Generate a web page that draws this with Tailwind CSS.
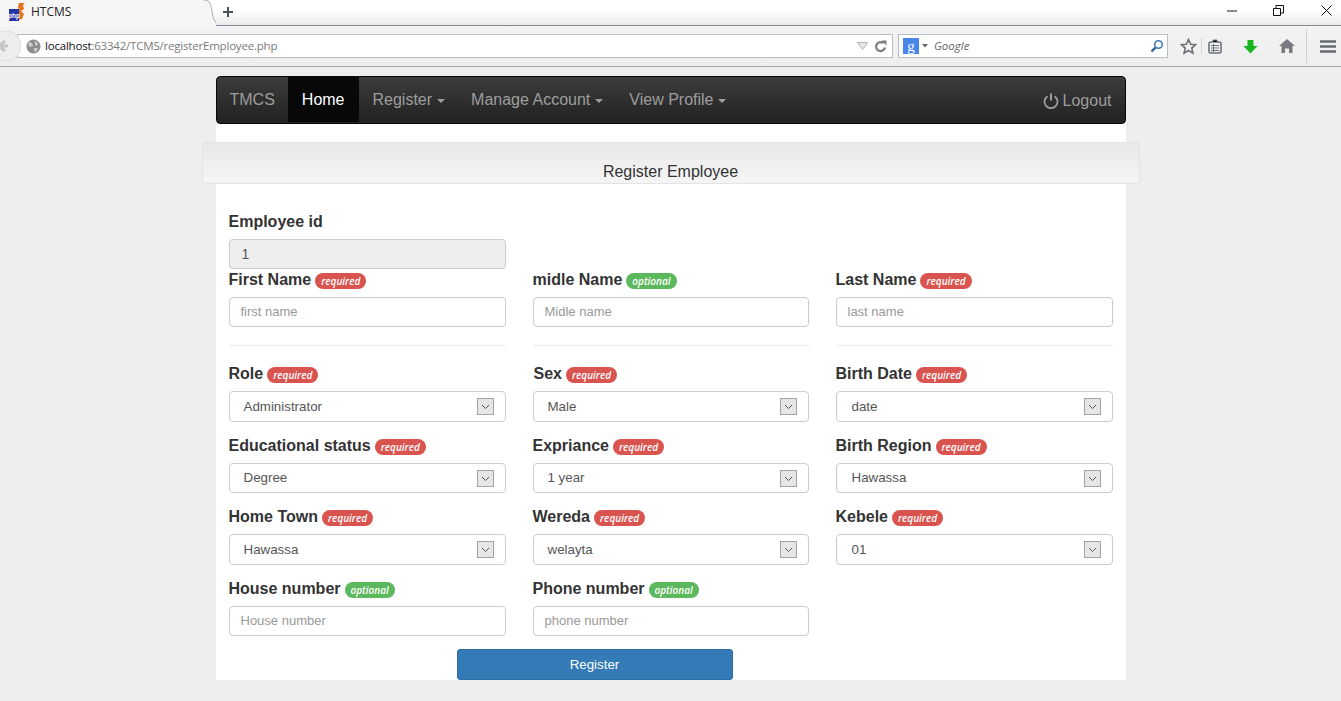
<!DOCTYPE html>
<html lang="en">
<head>
<meta charset="utf-8">
<title>HTCMS</title>
<script src="https://cdn.jsdelivr.net/npm/@tailwindcss/browser@4"></script>
</head>
<body class="h-[701px] overflow-hidden bg-[#eeeeee] font-['Liberation_Sans',Arial,sans-serif] text-[#333]">
<!-- browser chrome -->
<header class="relative h-[67px] font-['Open_Sans',sans-serif]">
  <div class="relative flex h-[26px] items-start border-b border-[#7f8b96] bg-gradient-to-b from-white from-40% to-[#ebebeb]">
    <svg class="absolute left-0 top-0 h-[26px] w-[216px]" viewBox="0 0 216 26"><path d="M0 0H204C210 0 211 5 212 11C213 19 215 23 219 25.5H219V26H0Z" fill="#f6f6f6"/><path d="M204 0C210 0 211 5 212 11C213 19 215 23 219 25.5" fill="none" stroke="#a6adb3"/></svg>
    <div class="relative flex h-[24px] w-[212px] items-center pl-[9px]">
      <svg width="17" height="18" viewBox="0 0 17 18" class="shrink-0"><path d="M10 0h6l-2 2 1 4-3 2 3 3-2 5-4 1 1-4-1-3 1-3-1-3z" fill="#e8741a"/><rect x="0" y="6" width="10" height="12" fill="#2533a8"/><text x="5" y="15" text-anchor="middle" font-size="6.5" font-weight="700" fill="#fff" font-family="Liberation Sans">php</text></svg>
      <span class="ml-[5px] text-[12px] leading-none text-[#222]">HTCMS</span>
    </div>
    <svg class="relative ml-[10px] mt-[6px]" width="12" height="12" viewBox="0 0 12 12"><path d="M6 1v10M1 6h10" stroke="#4a5158" stroke-width="2"/></svg>
    <div class="ml-auto flex h-[20px] items-center text-[#111]">
      <svg class="mr-[35px]" width="11" height="11" viewBox="0 0 11 11"><path d="M0 6h10" stroke="#111"/></svg>
      <svg class="mr-[37px]" width="11" height="11" viewBox="0 0 11 11"><path d="M.5 3.5h7v7h-7zM3 3V.5h7.5V8H8" fill="none" stroke="#111"/></svg>
      <svg class="mr-[9px]" width="11" height="11" viewBox="0 0 11 11"><path d="M.5.5l10 10M10.500.5l-10 10" stroke="#111" stroke-width="1"/></svg>
    </div>
  </div>
  <div class="flex h-[41px] items-center border-b border-[#aaaaaa] bg-gradient-to-b from-[#f3f3f3] to-[#eeeeee] pl-[17px]">
    <div class="flex h-[24px] w-[876px] items-center border border-[#b5bfca] bg-white pl-[8px] pr-[4px]">
      <svg width="15" height="15" viewBox="0 0 15 15" class="shrink-0"><circle cx="7.500" cy="7.500" r="7" fill="#8d8d8d"/><path d="M3 3l3 1 1 3-3 1-2-2zM9 2l3 2-1 3-2-1zM8 9l4 0-2 4-2-1z" fill="#c9c9c9"/></svg>
      <span class="ml-[4px] text-[11.5px] tracking-[-0.2px] text-[#111]">localhost<span class="text-[#7a7a7a]">:63342/TCMS/registerEmployee.php</span></span>
      <svg class="ml-auto" width="11" height="8" viewBox="0 0 11 8"><path d="M.5.500h10L5.500 7.500z" fill="#e8e8e8" stroke="#b5b5b5"/></svg>
      <svg class="ml-[6px] mr-[1px]" width="13" height="13" viewBox="0 0 13 13"><path d="M11 7.500A4.500 4.500 0 1 1 9.500 3.200" fill="none" stroke="#7b7f84" stroke-width="2.200"/><path d="M7.500 .5h5v5z" fill="#7b7f84"/></svg>
    </div>
    <div class="ml-[5px] flex h-[24px] w-[270px] items-center border border-[#b5bfca] bg-white pl-[4px] pr-[3px]">
      <span class="flex h-[16px] w-[16px] items-center justify-center bg-[#4a86e8] font-['Liberation_Serif',serif] text-[15px] leading-none text-white">g</span>
      <svg class="ml-[3px]" width="7" height="4" viewBox="0 0 7 4"><path d="M0 0h6L3 3.500z" fill="#666"/></svg>
      <span class="ml-[5px] text-[11.5px] italic text-[#666]">Google</span>
      <svg class="ml-auto" width="14" height="14" viewBox="0 0 14 14"><circle cx="8.500" cy="5.500" r="3.800" fill="none" stroke="#3d7ab5" stroke-width="1.600"/><path d="M5.500 8.500L1.500 12.500" stroke="#2a5f96" stroke-width="2.400"/></svg>
    </div>
    <svg class="ml-[12px]" width="17" height="17" viewBox="0 0 17 17"><path d="M8.500 1.500l2.100 4.700 5 .5-3.800 3.400 1.100 5-4.400-2.600-4.400 2.600 1.100-5L1.400 6.700l5-.5z" fill="none" stroke="#6e7277" stroke-width="1.600"/></svg>
    <span class="ml-[4px] h-[16px] w-px bg-[#d4d4d4]"></span>
    <svg class="ml-[6px]" width="14" height="15" viewBox="0 0 14 15"><rect x="1" y="3" width="12" height="11" rx="1.500" fill="none" stroke="#6e7277" stroke-width="1.600"/><path d="M5 3V1h4v2M3 6.500h8M3 9h8M3 11.500h8M5.500 5v8" stroke="#6e7277"/></svg>
    <svg class="ml-[21px]" width="15" height="15" viewBox="0 0 15 15"><path d="M4.500 1h6v6h4L7.500 14.500.5 7h4z" fill="#18b51e"/></svg>
    <svg class="ml-[21px]" width="16" height="14" viewBox="0 0 16 14"><path d="M8 0l8 7h-2.500v7h-3.500V9.500H6V14H2.500V7H0z" fill="#777b80"/></svg>
    <span class="ml-[11px] h-[34px] w-px bg-[#d0d0d0]"></span>
    <svg class="ml-[13px]" width="16" height="13" viewBox="0 0 16 13"><path d="M0 1.500h16M0 6.500h16M0 11.500h16" stroke="#666a6f" stroke-width="2.600"/></svg>
  </div>
  <svg class="absolute left-0 top-[29px]" width="24" height="34" viewBox="0 0 24 34"><circle cx="6" cy="17" r="15" fill="#eeeeee" stroke="#dddddd"/><path d="M-1 17h9M5 12l-6 5 6 5" fill="none" stroke="#c4c4c4" stroke-width="3"/></svg>
</header>
<!-- page -->
<main class="mx-auto mt-[9px] w-[910px] bg-white">
  <nav class="flex h-[48px] items-stretch rounded-[4px] border border-[#080808] bg-gradient-to-b from-[#3c3c3c] to-[#222222] text-[16px] text-[#9d9d9d]">
    <a class="flex h-[45px] items-center pl-[13px] pr-[13px]">TMCS</a>
    <a class="flex h-[45px] items-center bg-[#080808] px-[14px] text-white">Home</a>
    <a class="flex h-[45px] items-center gap-[5px] pl-[14px] pr-[12px]">Register <i class="mt-[2px] border-x-[4px] border-t-[4px] border-x-transparent border-t-[#9d9d9d]"></i></a>
    <a class="flex h-[45px] items-center gap-[5px] px-[14px]">Manage Account <i class="mt-[2px] border-x-[4px] border-t-[4px] border-x-transparent border-t-[#9d9d9d]"></i></a>
    <a class="flex h-[45px] items-center gap-[5px] px-[12px]">View Profile <i class="mt-[2px] border-x-[4px] border-t-[4px] border-x-transparent border-t-[#9d9d9d]"></i></a>
    <a class="ml-auto flex h-[47px] items-center gap-[4px] pr-[13px]">
      <svg width="16" height="16" viewBox="0 0 16 16"><path d="M4.500 3.200a6.500 6.500 0 1 0 7 0" fill="none" stroke="#9d9d9d" stroke-width="1.800"/><path d="M8 0.500v7" stroke="#9d9d9d" stroke-width="2"/></svg>
      Logout</a>
  </nav>
  <div class="-mx-[14px] mt-[18px] flex h-[42px] items-end justify-center rounded-[4px] border border-[#e3e3e3] bg-gradient-to-b from-[#e8e8e8] to-[#f5f5f5] text-[16px] leading-[23px] text-[#333]">Register Employee</div>
  <form class="px-[13px] pt-[28px]">
    <div class="grid grid-cols-[277px_276px_277px] gap-x-[27px]">
      <div>
        <label class="flex h-[27px] items-start text-[16px] font-bold leading-[20px]">Employee id</label>
        <div class="flex h-[30px] items-center rounded-[4px] border border-[#ccc] bg-[#eeeeee] pl-[12px] text-[14px] text-[#555]">1</div>
      </div>
    </div>
    <div class="mt-px grid grid-cols-[277px_276px_277px] gap-x-[27px]">
      <div>
        <label class="flex h-[27px] items-start gap-[4px] text-[16px] font-bold leading-[20px]">First Name <span class="mt-[3px] rounded-full bg-[#d9534f] px-[6px] font-['Open_Sans',sans-serif] text-[10px] font-semibold italic leading-[16px] text-white">required</span></label>
        <div class="flex h-[30px] items-center rounded-[4px] border border-[#ccc] bg-white pl-[11px] text-[13px] text-[#999]">first name</div>
      </div>
      <div>
        <label class="flex h-[27px] items-start gap-[4px] text-[16px] font-bold leading-[20px]">midle Name <span class="mt-[3px] rounded-full bg-[#5cb85c] px-[6px] font-['Open_Sans',sans-serif] text-[10px] font-semibold italic leading-[16px] text-white">optional</span></label>
        <div class="flex h-[30px] items-center rounded-[4px] border border-[#ccc] bg-white pl-[11px] text-[13px] text-[#999]">Midle name</div>
      </div>
      <div>
        <label class="flex h-[27px] items-start gap-[4px] text-[16px] font-bold leading-[20px]">Last Name <span class="mt-[3px] rounded-full bg-[#d9534f] px-[6px] font-['Open_Sans',sans-serif] text-[10px] font-semibold italic leading-[16px] text-white">required</span></label>
        <div class="flex h-[30px] items-center rounded-[4px] border border-[#ccc] bg-white pl-[11px] text-[13px] text-[#999]">last name</div>
      </div>
    </div>
    <div class="mt-[18px] grid grid-cols-[277px_276px_277px] gap-x-[27px]">
      <hr class="border-[#eeeeee]"><hr class="w-[277px] border-[#eeeeee]"><hr class="border-[#eeeeee]">
    </div>
    <div class="mt-[18px] grid grid-cols-[277px_276px_277px] gap-x-[27px] gap-y-[14px]">
      <div>
        <label class="flex h-[27px] items-start gap-[4px] text-[16px] font-bold leading-[20px]">Role <span class="mt-[3px] rounded-full bg-[#d9534f] px-[6px] font-['Open_Sans',sans-serif] text-[10px] font-semibold italic leading-[16px] text-white">required</span></label>
        <div class="flex h-[31px] items-center justify-between rounded-[4px] border border-[#ccc] bg-white pl-[14px] pr-[11px] text-[13.33px] text-[#555]">Administrator <svg width="17" height="17" viewBox="0 0 17 17"><rect x=".5" y=".5" width="16" height="16" fill="#e6e6e6" stroke="#a3a3a3"/><path d="M5 7l3.500 3.500L12 7" fill="none" stroke="#555"/></svg></div>
      </div>
      <div>
        <label class="flex h-[27px] items-start gap-[4px] pl-px text-[16px] font-bold leading-[20px]">Sex <span class="mt-[3px] rounded-full bg-[#d9534f] px-[6px] font-['Open_Sans',sans-serif] text-[10px] font-semibold italic leading-[16px] text-white">required</span></label>
        <div class="flex h-[31px] items-center justify-between rounded-[4px] border border-[#ccc] bg-white pl-[14px] pr-[11px] text-[13.33px] text-[#555]">Male <svg width="17" height="17" viewBox="0 0 17 17"><rect x=".5" y=".5" width="16" height="16" fill="#e6e6e6" stroke="#a3a3a3"/><path d="M5 7l3.500 3.500L12 7" fill="none" stroke="#555"/></svg></div>
      </div>
      <div>
        <label class="flex h-[27px] items-start gap-[4px] text-[16px] font-bold leading-[20px]">Birth Date <span class="mt-[3px] rounded-full bg-[#d9534f] px-[6px] font-['Open_Sans',sans-serif] text-[10px] font-semibold italic leading-[16px] text-white">required</span></label>
        <div class="flex h-[31px] items-center justify-between rounded-[4px] border border-[#ccc] bg-white pl-[15px] pr-[11px] text-[13.33px] text-[#555]">date <svg width="17" height="17" viewBox="0 0 17 17"><rect x=".5" y=".5" width="16" height="16" fill="#e6e6e6" stroke="#a3a3a3"/><path d="M5 7l3.500 3.500L12 7" fill="none" stroke="#555"/></svg></div>
      </div>
      <div>
        <label class="flex h-[27px] items-start gap-[4px] text-[16px] font-bold leading-[20px]">Educational status <span class="mt-[3px] rounded-full bg-[#d9534f] px-[6px] font-['Open_Sans',sans-serif] text-[10px] font-semibold italic leading-[16px] text-white">required</span></label>
        <div class="flex h-[30px] items-center justify-between rounded-[4px] border border-[#ccc] bg-white pl-[14px] pr-[11px] text-[13.33px] text-[#555]">Degree <svg width="17" height="17" viewBox="0 0 17 17"><rect x=".5" y=".5" width="16" height="16" fill="#e6e6e6" stroke="#a3a3a3"/><path d="M5 7l3.500 3.500L12 7" fill="none" stroke="#555"/></svg></div>
      </div>
      <div>
        <label class="flex h-[27px] items-start gap-[4px] text-[16px] font-bold leading-[20px]">Expriance <span class="mt-[3px] rounded-full bg-[#d9534f] px-[6px] font-['Open_Sans',sans-serif] text-[10px] font-semibold italic leading-[16px] text-white">required</span></label>
        <div class="flex h-[30px] items-center justify-between rounded-[4px] border border-[#ccc] bg-white pl-[14px] pr-[11px] text-[13.33px] text-[#555]">1 year <svg width="17" height="17" viewBox="0 0 17 17"><rect x=".5" y=".5" width="16" height="16" fill="#e6e6e6" stroke="#a3a3a3"/><path d="M5 7l3.500 3.500L12 7" fill="none" stroke="#555"/></svg></div>
      </div>
      <div>
        <label class="flex h-[27px] items-start gap-[4px] text-[16px] font-bold leading-[20px]">Birth Region <span class="mt-[3px] rounded-full bg-[#d9534f] px-[6px] font-['Open_Sans',sans-serif] text-[10px] font-semibold italic leading-[16px] text-white">required</span></label>
        <div class="flex h-[30px] items-center justify-between rounded-[4px] border border-[#ccc] bg-white pl-[15px] pr-[11px] text-[13.33px] text-[#555]">Hawassa <svg width="17" height="17" viewBox="0 0 17 17"><rect x=".5" y=".5" width="16" height="16" fill="#e6e6e6" stroke="#a3a3a3"/><path d="M5 7l3.500 3.500L12 7" fill="none" stroke="#555"/></svg></div>
      </div>
      <div>
        <label class="flex h-[27px] items-start gap-[4px] text-[16px] font-bold leading-[20px]">Home Town <span class="mt-[3px] rounded-full bg-[#d9534f] px-[6px] font-['Open_Sans',sans-serif] text-[10px] font-semibold italic leading-[16px] text-white">required</span></label>
        <div class="flex h-[31px] items-center justify-between rounded-[4px] border border-[#ccc] bg-white pl-[14px] pr-[11px] text-[13.33px] text-[#555]">Hawassa <svg width="17" height="17" viewBox="0 0 17 17"><rect x=".5" y=".5" width="16" height="16" fill="#e6e6e6" stroke="#a3a3a3"/><path d="M5 7l3.500 3.500L12 7" fill="none" stroke="#555"/></svg></div>
      </div>
      <div>
        <label class="flex h-[27px] items-start gap-[4px] text-[16px] font-bold leading-[20px]">Wereda <span class="mt-[3px] rounded-full bg-[#d9534f] px-[6px] font-['Open_Sans',sans-serif] text-[10px] font-semibold italic leading-[16px] text-white">required</span></label>
        <div class="flex h-[31px] items-center justify-between rounded-[4px] border border-[#ccc] bg-white pl-[14px] pr-[11px] text-[13.33px] text-[#555]">welayta <svg width="17" height="17" viewBox="0 0 17 17"><rect x=".5" y=".5" width="16" height="16" fill="#e6e6e6" stroke="#a3a3a3"/><path d="M5 7l3.500 3.500L12 7" fill="none" stroke="#555"/></svg></div>
      </div>
      <div>
        <label class="flex h-[27px] items-start gap-[4px] text-[16px] font-bold leading-[20px]">Kebele <span class="mt-[3px] rounded-full bg-[#d9534f] px-[6px] font-['Open_Sans',sans-serif] text-[10px] font-semibold italic leading-[16px] text-white">required</span></label>
        <div class="flex h-[31px] items-center justify-between rounded-[4px] border border-[#ccc] bg-white pl-[15px] pr-[11px] text-[13.33px] text-[#555]">01 <svg width="17" height="17" viewBox="0 0 17 17"><rect x=".5" y=".5" width="16" height="16" fill="#e6e6e6" stroke="#a3a3a3"/><path d="M5 7l3.500 3.500L12 7" fill="none" stroke="#555"/></svg></div>
      </div>
      <div>
        <label class="flex h-[27px] items-start gap-[4px] text-[16px] font-bold leading-[20px]">House number <span class="mt-[3px] rounded-full bg-[#5cb85c] px-[6px] font-['Open_Sans',sans-serif] text-[10px] font-semibold italic leading-[16px] text-white">optional</span></label>
        <div class="flex h-[30px] items-center rounded-[4px] border border-[#ccc] bg-white pl-[11px] text-[13px] text-[#999]">House number</div>
      </div>
      <div>
        <label class="flex h-[27px] items-start gap-[4px] text-[16px] font-bold leading-[20px]">Phone number <span class="mt-[3px] rounded-full bg-[#5cb85c] px-[6px] font-['Open_Sans',sans-serif] text-[10px] font-semibold italic leading-[16px] text-white">optional</span></label>
        <div class="flex h-[30px] items-center rounded-[4px] border border-[#ccc] bg-white pl-[11px] text-[13px] text-[#999]">phone number</div>
      </div>
    </div>
    <button type="button" class="ml-[228px] mt-[13px] block h-[31px] w-[276px] rounded-[3px] border border-[#2e6da4] bg-[#337ab7] text-[13.33px] text-white">Register</button>
  </form>
</main>
</body>
</html>
